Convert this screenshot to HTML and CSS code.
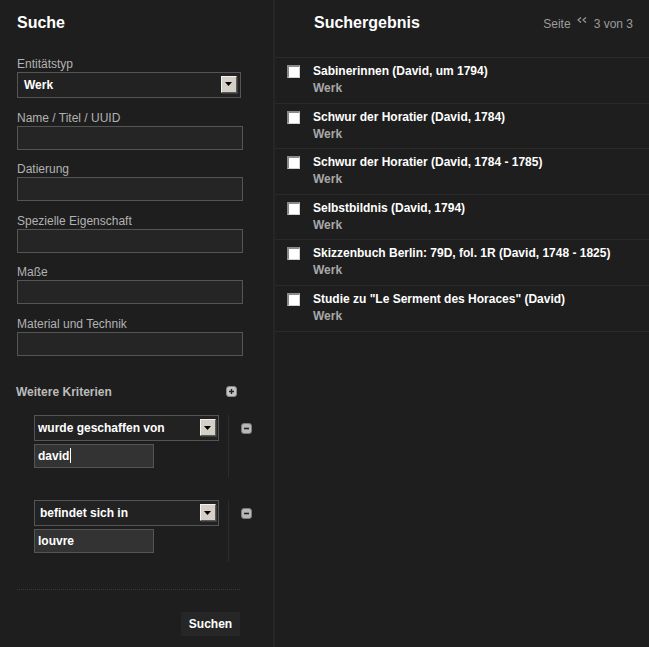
FILE: index.html
```html
<!DOCTYPE html>
<html lang="de">
<head>
<meta charset="utf-8">
<title>Suche</title>
<link rel="stylesheet" href="styles.css">
</head>
<body>
<div class="page">
  <aside class="search">
    <h1 class="panel-title">Suche</h1>

    <div class="field">
      <div class="field-label">Entitätstyp</div>
      <div class="select select-main">
        <span class="select-value">Werk</span>
        <span class="dd-btn"><svg width="8" height="4" viewBox="0 0 8 4"><path d="M0 0H7L3.5 4Z" fill="#000"/></svg></span>
      </div>
    </div>

    <div class="field">
      <div class="field-label">Name / Titel / UUID</div>
      <div class="input"></div>
    </div>
    <div class="field">
      <div class="field-label">Datierung</div>
      <div class="input"></div>
    </div>
    <div class="field">
      <div class="field-label">Spezielle Eigenschaft</div>
      <div class="input"></div>
    </div>
    <div class="field">
      <div class="field-label">Maße</div>
      <div class="input"></div>
    </div>
    <div class="field">
      <div class="field-label">Material und Technik</div>
      <div class="input"></div>
    </div>

    <div class="more-head">
      <span class="more-title">Weitere Kriterien</span>
      <svg class="icon-btn" width="11" height="11" viewBox="0 0 11 11"><rect x="0.5" y="0.5" width="10" height="10" rx="2.5" fill="#c4c4c4" stroke="#8a8a8a"/><path d="M3 5.5H8M5.5 3V8" stroke="#222" stroke-width="1.4"/></svg>
    </div>

    <div class="criteria">
      <div class="criterion">
        <div class="crit-fields">
          <div class="select select-crit">
            <span class="select-value">wurde geschaffen von</span>
            <span class="dd-btn"><svg width="8" height="4" viewBox="0 0 8 4"><path d="M0 0H7L3.5 4Z" fill="#000"/></svg></span>
          </div>
          <div class="input input-crit"><span class="input-value">david</span><span class="caret"></span></div>
        </div>
        <div class="crit-side">
          <svg class="icon-btn" width="11" height="11" viewBox="0 0 11 11"><rect x="0.5" y="0.5" width="10" height="10" rx="2.5" fill="#b8b8b8" stroke="#7c7c7c"/><path d="M3 5.5H8" stroke="#222" stroke-width="1.6"/></svg>
        </div>
      </div>

      <div class="criterion">
        <div class="crit-fields">
          <div class="select select-crit select-crit2">
            <span class="select-value">befindet sich in</span>
            <span class="dd-btn"><svg width="8" height="4" viewBox="0 0 8 4"><path d="M0 0H7L3.5 4Z" fill="#000"/></svg></span>
          </div>
          <div class="input input-crit"><span class="input-value">louvre</span></div>
        </div>
        <div class="crit-side">
          <svg class="icon-btn" width="11" height="11" viewBox="0 0 11 11"><rect x="0.5" y="0.5" width="10" height="10" rx="2.5" fill="#b8b8b8" stroke="#7c7c7c"/><path d="M3 5.5H8" stroke="#222" stroke-width="1.6"/></svg>
        </div>
      </div>
    </div>

    <div class="dotted"></div>

    <div class="actions">
      <button class="btn" type="button">Suchen</button>
    </div>
  </aside>

  <main class="results">
    <header class="results-head">
      <h2 class="panel-title">Suchergebnis</h2>
      <div class="pager">
        <span>Seite</span>
        <svg class="prev" width="10" height="6" viewBox="0 0 10 6"><path d="M4 0.5L1 3L4 5.5M9 0.5L6 3L9 5.5" fill="none" stroke="#9a9a9a" stroke-width="1.2"/></svg>
        <span>3 von 3</span>
      </div>
    </header>

    <ul class="result-list">
      <li class="result"><span class="checkbox"></span><div class="result-text"><div class="result-title">Sabinerinnen (David, um 1794)</div><div class="result-type">Werk</div></div></li>
      <li class="result"><span class="checkbox"></span><div class="result-text"><div class="result-title">Schwur der Horatier (David, 1784)</div><div class="result-type">Werk</div></div></li>
      <li class="result"><span class="checkbox"></span><div class="result-text"><div class="result-title">Schwur der Horatier (David, 1784 - 1785)</div><div class="result-type">Werk</div></div></li>
      <li class="result"><span class="checkbox"></span><div class="result-text"><div class="result-title">Selbstbildnis (David, 1794)</div><div class="result-type">Werk</div></div></li>
      <li class="result"><span class="checkbox"></span><div class="result-text"><div class="result-title">Skizzenbuch Berlin: 79D, fol. 1R (David, 1748 - 1825)</div><div class="result-type">Werk</div></div></li>
      <li class="result"><span class="checkbox"></span><div class="result-text"><div class="result-title">Studie zu "Le Serment des Horaces" (David)</div><div class="result-type">Werk</div></div></li>
    </ul>
  </main>
</div>
</body>
</html>
```

FILE: styles.css
```css
* { box-sizing: border-box; }

html, body {
  margin: 0;
  padding: 0;
  background: #1e1e1e;
}

body {
  font-family: "Liberation Sans", Arial, sans-serif;
  font-size: 12px;
  color: #fff;
}

.page {
  display: flex;
  width: 649px;
  height: 647px;
  overflow: hidden;
}

/* ---------- left panel ---------- */
.search {
  width: 275px;
  flex: none;
  padding: 13px 0 0 17px;
  background: #1e1e1e;
  border-right: 2px solid #262626;
}

.panel-title {
  margin: 0;
  font-size: 16px;
  line-height: 20px;
  font-weight: bold;
  color: #fff;
}

.search .panel-title {
  margin-bottom: 24px;
}

.field {
  margin-bottom: 12.5px;
}

.field-label {
  line-height: 14px;
  margin-bottom: 1px;
  color: #b2b2b2;
}

.select {
  display: flex;
  align-items: center;
  justify-content: space-between;
  height: 26px;
  background: #222;
  border: 1px solid #555;
  font-weight: bold;
  color: #fff;
}

.select-main {
  width: 224px;
  padding: 0 3px 0 6px;
}

.select-main .dd-btn {
  margin-top: -2px;
}

.dd-btn {
  display: flex;
  align-items: center;
  justify-content: center;
  width: 16px;
  height: 17px;
  background: #d4d0c8;
  border-top: 1px solid #f4f2ee;
  border-left: 1px solid #f4f2ee;
  border-right: 1px solid #5a5a5a;
  border-bottom: 1px solid #5a5a5a;
  box-shadow: 1px 1px 0 #3a3a3a;
}

.input {
  width: 226px;
  height: 24px;
  background: #252525;
  border: 1px solid #555;
}

.more-head {
  display: flex;
  align-items: center;
  justify-content: space-between;
  width: 221px;
  margin: 29px 0 0 -1px;
  line-height: 14px;
}

.more-title {
  font-weight: bold;
  color: #bcbcbc;
}

.icon-btn {
  display: block;
  flex: none;
}

/* ---------- criteria ---------- */
.criteria {
  padding-left: 17px;
  margin-top: 16px;
}

.criterion {
  display: flex;
  align-items: stretch;
}

.criterion + .criterion {
  margin-top: 23px;
}

.crit-fields {
  width: 185px;
  padding-bottom: 9px;
}

.select-crit {
  width: 185px;
  padding: 0 2px 0 3px;
}

.select-crit2 {
  padding-left: 5px;
}

.input-crit {
  display: flex;
  align-items: center;
  width: 120px;
  margin-top: 3px;
  padding-left: 3px;
  background: #333;
  font-weight: bold;
  color: #fff;
}

.caret {
  display: inline-block;
  width: 1px;
  height: 15px;
  margin-left: 1px;
  background: #fff;
}

.crit-side {
  margin-left: 9px;
  padding: 8px 0 0 12px;
  border-left: 1px solid #2c2c2c;
}

.dotted {
  width: 223px;
  margin-top: 27px;
  border-top: 1px dotted #3c3c3c;
}

.actions {
  display: flex;
  justify-content: flex-end;
  width: 223px;
  margin-top: 22px;
}

.btn {
  height: 24px;
  width: 59px;
  padding: 0;
  border: none;
  background: #262626;
  color: #fff;
  font-family: "Liberation Sans", Arial, sans-serif;
  font-size: 12px;
  font-weight: bold;
}

/* ---------- right panel ---------- */
.results {
  flex: 1;
  background: #1e1e1e;
}

.results-head {
  display: flex;
  justify-content: space-between;
  align-items: flex-start;
  height: 57px;
  padding: 13px 16px 0 39px;
}

.pager {
  display: flex;
  align-items: flex-start;
  line-height: 14px;
  margin-top: 4px;
  color: #9c9c9c;
}

.prev {
  display: block;
  margin: 0 7px 0 6px;
}

.result-list {
  list-style: none;
  margin: 0;
  padding: 0;
}

.result {
  display: flex;
  align-items: flex-start;
  height: 45.5px;
  padding: 6px 0 0 12px;
  border-top: 1px solid #2a2a2a;
}

.result:last-child {
  height: 47px;
  border-bottom: 1px solid #2a2a2a;
}

.checkbox {
  flex: none;
  width: 13px;
  height: 13px;
  margin: 1px 13px 0 0;
  background: #fff;
  border-top: 2px solid #8a8a8a;
  border-left: 2px solid #8a8a8a;
  border-right: 1px solid #d4d0c8;
  border-bottom: 1px solid #d4d0c8;
}

.result-title {
  line-height: 15px;
  font-weight: bold;
  color: #fff;
}

.result-type {
  margin-top: 2px;
  line-height: 15px;
  font-weight: bold;
  color: #a8a8a8;
}
```
